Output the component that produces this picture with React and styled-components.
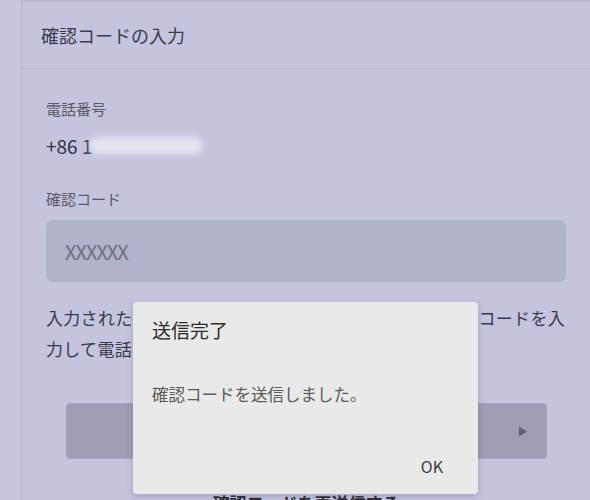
import React from 'react'
import { styled, createGlobalStyle } from 'styled-components';

const GlobalStyle = createGlobalStyle`
  html, body {
    margin: 0;
    padding: 0;
    background: #c4c4df;
    font-family: "Noto Sans CJK JP", "Noto Sans", sans-serif;
    overflow: hidden;
  }
`;

const Page = styled.div`
  display: flex;
  width: 590px;
  height: 500px;
  background: #c4c4df;
  position: relative;
  overflow: hidden;
`;

const Gutter = styled.div`
  width: 21px;
  flex-shrink: 0;
  background: #c6c6e0;
  border-right: 1px solid #b6b6d0;
`;

const Card = styled.div`
  flex: 1;
  display: flex;
  flex-direction: column;
  border-top: 2px solid #b8b8d2;
`;

const Header = styled.div`
  flex-shrink: 0;
  height: 66px;
  display: flex;
  align-items: center;
  padding-left: 19px;
  border-bottom: 1px solid #b3b3cd;
  font-size: 18px;
  color: #3b3b47;
`;

const Body = styled.div`
  flex-shrink: 0;
  display: flex;
  flex-direction: column;
  padding: 29px 24px 0 24px;
`;

const Label = styled.div`
  font-size: 15px;
  line-height: 22px;
  color: #5a5a66;
  margin-top: ${p => p.$gap || 0}px;
`;

const Phone = styled.div`
  display: flex;
  align-items: center;
  margin-top: 12px;
  height: 26px;
  font-size: 19px;
  color: #33333d;
`;

const Blur = styled.span`
  display: inline-block;
  width: 112px;
  height: 17px;
  margin-left: -2px;
  background: #e4e4ef;
  border-radius: 6px;
  filter: blur(3px);
`;

const Input = styled.div`
  flex-shrink: 0;
  margin-top: 10px;
  height: 62px;
  border-radius: 7px;
  background: #b1b2cb;
  display: flex;
  align-items: center;
  padding-left: 19px;
  font-size: 20px;
  letter-spacing: -1px;
  color: #6f7082;
`;

const Note = styled.p`
  margin: 20px 0 0;
  font-size: 17px;
  letter-spacing: 0.3px;
  line-height: 31px;
  color: #3a3a46;
`;

const Button = styled.div`
  flex-shrink: 0;
  margin: 39px 19px 0 20px;
  height: 54px;
  border-radius: 4px;
  background: #9d9eb4;
  border: 1px solid #a4a5bb;
  display: flex;
  align-items: center;
  justify-content: flex-end;
  padding-right: 18px;
`;

const Resend = styled.div`
  margin-top: 31px;
  text-align: center;
  font-size: 17px;
  font-weight: 700;
  color: #2e2e3a;
`;

const Dialog = styled.div`
  position: absolute;
  left: 133px;
  top: 302px;
  width: 345px;
  height: 192px;
  box-sizing: border-box;
  background: #e9e9e9;
  border-radius: 4px;
  box-shadow: 0 2px 6px rgba(60, 60, 90, 0.25);
  display: flex;
  flex-direction: column;
  padding: 14px 35px 16px 19px;
`;

const DialogTitle = styled.div`
  font-size: 19px;
  line-height: 28px;
  color: #2c2c2c;
`;

const DialogText = styled.div`
  margin-top: 38px;
  font-size: 16.5px;
  line-height: 24px;
  color: #5a5a5a;
`;

const DialogActions = styled.div`
  margin-top: auto;
  display: flex;
  justify-content: flex-end;
  font-size: 16px;
  color: #3d3d3d;
`;

const App = () => {
  return (
    <Page>
      <GlobalStyle />
      <Gutter />
      <Card>
        <Header>確認コードの入力</Header>
        <Body>
          <Label>電話番号</Label>
          <Phone>+86 1<Blur /></Phone>
          <Label $gap={30}>確認コード</Label>
          <Input>XXXXXX</Input>
          <Note>
            入力された携帯電話番号宛てにＳＭＳで送信された確認コードを入力して電話番号の認証を完了してください。
          </Note>
          <Button>
            <svg width="10" height="11" viewBox="0 0 10 11">
              <path d="M1 0.5 L9 5.5 L1 10.5 Z" fill="#5e5f72" />
            </svg>
          </Button>
          <Resend>確認コードを再送信する</Resend>
        </Body>
      </Card>
      <Dialog>
        <DialogTitle>送信完了</DialogTitle>
        <DialogText>確認コードを送信しました。</DialogText>
        <DialogActions>OK</DialogActions>
      </Dialog>
    </Page>
  )
}

export default App
